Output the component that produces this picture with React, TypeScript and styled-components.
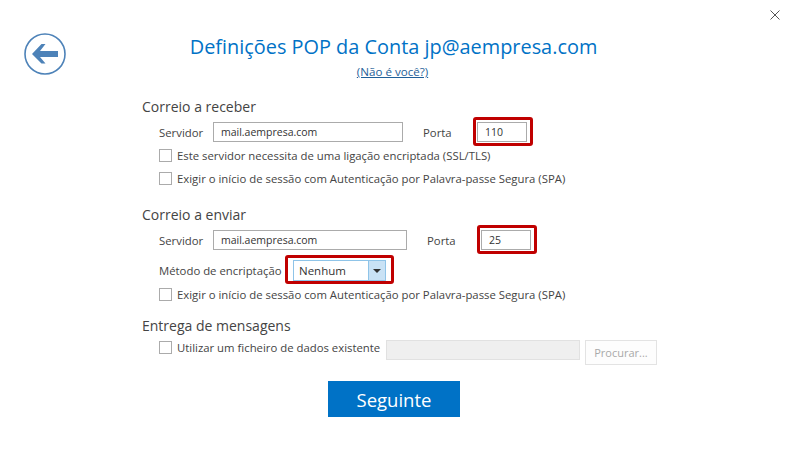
import React from "react";
import styled, { createGlobalStyle } from "styled-components";

const GlobalStyle = createGlobalStyle`
  html, body {
    margin: 0;
    padding: 0;
    background: #fff;
  }
  body {
    font-family: "Open Sans", "Noto Sans", sans-serif;
    color: #444;
  }
`;

const Page = styled.div`
  position: relative;
  width: 796px;
  height: 473px;
  overflow: hidden;
  background: #fff;
`;

const CloseButton = styled.svg`
  position: absolute;
  top: 10px;
  right: 16px;
  width: 10px;
  height: 10px;
`;

const Header = styled.header`
  display: grid;
  grid-template-columns: 42px 1fr 42px;
  padding: 33px 33px 0 24px;
  height: 64px;
`;

const BackIcon = styled.svg`
  width: 42px;
  height: 42px;
`;

const HeaderText = styled.div`
  display: flex;
  flex-direction: column;
  align-items: center;
  padding-top: 1px;
`;

const Title = styled.h1`
  margin: 0;
  font-size: 19.9px;
  line-height: 26px;
  font-weight: 400;
  color: #0072c6;
  white-space: nowrap;
`;

const NotYou = styled.a`
  margin: 5px 2px 0 0;
  font-size: 11.6px;
  line-height: 14px;
  color: #1f5f99;
  text-decoration: underline;
`;

const Form = styled.div`
  display: flex;
  flex-direction: column;
  padding-left: 142px;
`;

const Section = styled.section<{ $gap: number }>`
  margin-top: ${(p) => p.$gap}px;
`;

const SectionTitle = styled.h2`
  margin: 0;
  font-size: 14px;
  line-height: 20px;
  font-weight: 400;
  color: #444;
`;

const Row = styled.div<{ $height: number }>`
  display: flex;
  align-items: center;
  height: ${(p) => p.$height}px;
  padding-left: 17px;
`;

const FileRow = styled.div`
  display: flex;
  align-items: flex-start;
  height: 29px;
  padding: 4px 0 0 17px;
  box-sizing: border-box;
`;

const Label = styled.span<{ $width: number; $left?: number }>`
  width: ${(p) => p.$width}px;
  margin-left: ${(p) => p.$left ?? 0}px;
  padding-top: 2px;
  font-size: 11.35px;
  color: #444;
  white-space: nowrap;
`;

const TextBox = styled.div<{ $width: number; $disabled?: boolean }>`
  box-sizing: border-box;
  width: ${(p) => p.$width}px;
  height: 20px;
  padding-left: 7px;
  border: 1px solid ${(p) => (p.$disabled ? "#e1e1e1" : "#ababab")};
  background: ${(p) => (p.$disabled ? "#efefef" : "#fff")};
  font-size: 10.5px;
  line-height: 19px;
  color: #333;
`;

const Highlight = styled.div<{ $padding: string }>`
  display: flex;
  align-items: center;
  padding: ${(p) => p.$padding};
  border: 3px solid #c00000;
  border-radius: 3px;
  background: #fff;
`;

const Select = styled.div`
  box-sizing: border-box;
  display: flex;
  align-items: stretch;
  width: 93px;
  height: 21px;
  border: 1px solid #8fc4e8;
`;

const SelectValue = styled.span`
  flex: 1;
  padding-left: 5px;
  font-size: 11.5px;
  line-height: 19px;
  color: #333;
`;

const SelectArrow = styled.span`
  display: flex;
  align-items: center;
  justify-content: center;
  width: 16px;
  border-left: 1px solid #8fc4e8;
  background: #c9e2f5;

  &::before {
    content: "";
    border-top: 4px solid #333;
    border-left: 4px solid transparent;
    border-right: 4px solid transparent;
  }
`;

const CheckRow = styled.label<{ $height: number }>`
  display: flex;
  align-items: center;
  height: ${(p) => p.$height}px;
  padding-left: 17px;
  font-size: 11.35px;
  color: #444;
  white-space: nowrap;
`;

const FileCheck = styled.label`
  display: flex;
  align-items: center;
  width: 227px;
  height: 15px;
  font-size: 11.35px;
  color: #444;
  white-space: nowrap;
`;

const CheckBox = styled.span`
  box-sizing: border-box;
  flex: none;
  width: 13px;
  height: 13px;
  margin-right: 5px;
  border: 1px solid #ababab;
  background: #fff;
`;

const BrowseButton = styled.button`
  box-sizing: border-box;
  width: 72px;
  height: 25px;
  margin: 0 0 0 5px;
  padding: 0;
  border: 1px solid #e3e3e3;
  background: #fdfdfd;
  font-family: inherit;
  font-size: 11px;
  color: #a9a9a9;
`;

const Footer = styled.div`
  display: flex;
  padding-left: 328px;
  margin-top: 16px;
`;

const NextButton = styled.button`
  width: 132px;
  height: 36px;
  padding: 0;
  border: 0;
  background: #0072c6;
  color: #fff;
  font-family: inherit;
  font-size: 18.5px;
`;

function Back() {
  return (
    <BackIcon viewBox="0 0 42 42">
      <circle cx="21" cy="21" r="20" fill="none" stroke="#4d82b8" strokeWidth="1.6" />
      <path d="M8 21 L17.5 11 L21.5 11 L16 18 L34 18 L34 24 L16 24 L21.5 30.5 L17.5 30.5 Z" fill="#4d82b8" />
    </BackIcon>
  );
}

const SPA = "Exigir o início de sessão com Autenticação por Palavra-passe Segura (SPA)";
const PORT_FRAME = "2px 3px 1px 1px";

export default function App() {
  return (
    <Page>
      <GlobalStyle />
      <CloseButton viewBox="0 0 10 10">
        <path d="M0.5 0.5 L9.5 9.5 M9.5 0.5 L0.5 9.5" stroke="#555" strokeWidth="1" fill="none" />
      </CloseButton>
      <Header>
        <Back />
        <HeaderText>
          <Title>Definições POP da Conta jp@aempresa.com</Title>
          <NotYou href="#">(Não é você?)</NotYou>
        </HeaderText>
      </Header>
      <Form>
        <Section $gap={0}>
          <SectionTitle>Correio a receber</SectionTitle>
          <Row $height={29}>
            <Label $width={54}>Servidor</Label>
            <TextBox $width={190}>mail.aempresa.com</TextBox>
            <Label $width={50} $left={20}>Porta</Label>
            <Highlight $padding={PORT_FRAME}>
              <TextBox $width={50}>110</TextBox>
            </Highlight>
          </Row>
          <CheckRow $height={18}>
            <CheckBox />
            Este servidor necessita de uma ligação encriptada (SSL/TLS)
          </CheckRow>
          <CheckRow $height={28}>
            <CheckBox />
            {SPA}
          </CheckRow>
        </Section>
        <Section $gap={13}>
          <SectionTitle>Correio a enviar</SectionTitle>
          <Row $height={29}>
            <Label $width={54}>Servidor</Label>
            <TextBox $width={194}>mail.aempresa.com</TextBox>
            <Label $width={50} $left={20}>Porta</Label>
            <Highlight $padding={PORT_FRAME}>
              <TextBox $width={50}>25</TextBox>
            </Highlight>
          </Row>
          <Row $height={31}>
            <Label $width={126}>Método de encriptação</Label>
            <Highlight $padding="2px 5px 0">
              <Select>
                <SelectValue>Nenhum</SelectValue>
                <SelectArrow />
              </Select>
            </Highlight>
          </Row>
          <CheckRow $height={19}>
            <CheckBox />
            {SPA}
          </CheckRow>
        </Section>
        <Section $gap={12}>
          <SectionTitle>Entrega de mensagens</SectionTitle>
          <FileRow>
            <FileCheck>
              <CheckBox />
              Utilizar um ficheiro de dados existente
            </FileCheck>
            <TextBox $width={194} $disabled />
            <BrowseButton disabled>Procurar...</BrowseButton>
          </FileRow>
        </Section>
      </Form>
      <Footer>
        <NextButton>Seguinte</NextButton>
      </Footer>
    </Page>
  );
}
